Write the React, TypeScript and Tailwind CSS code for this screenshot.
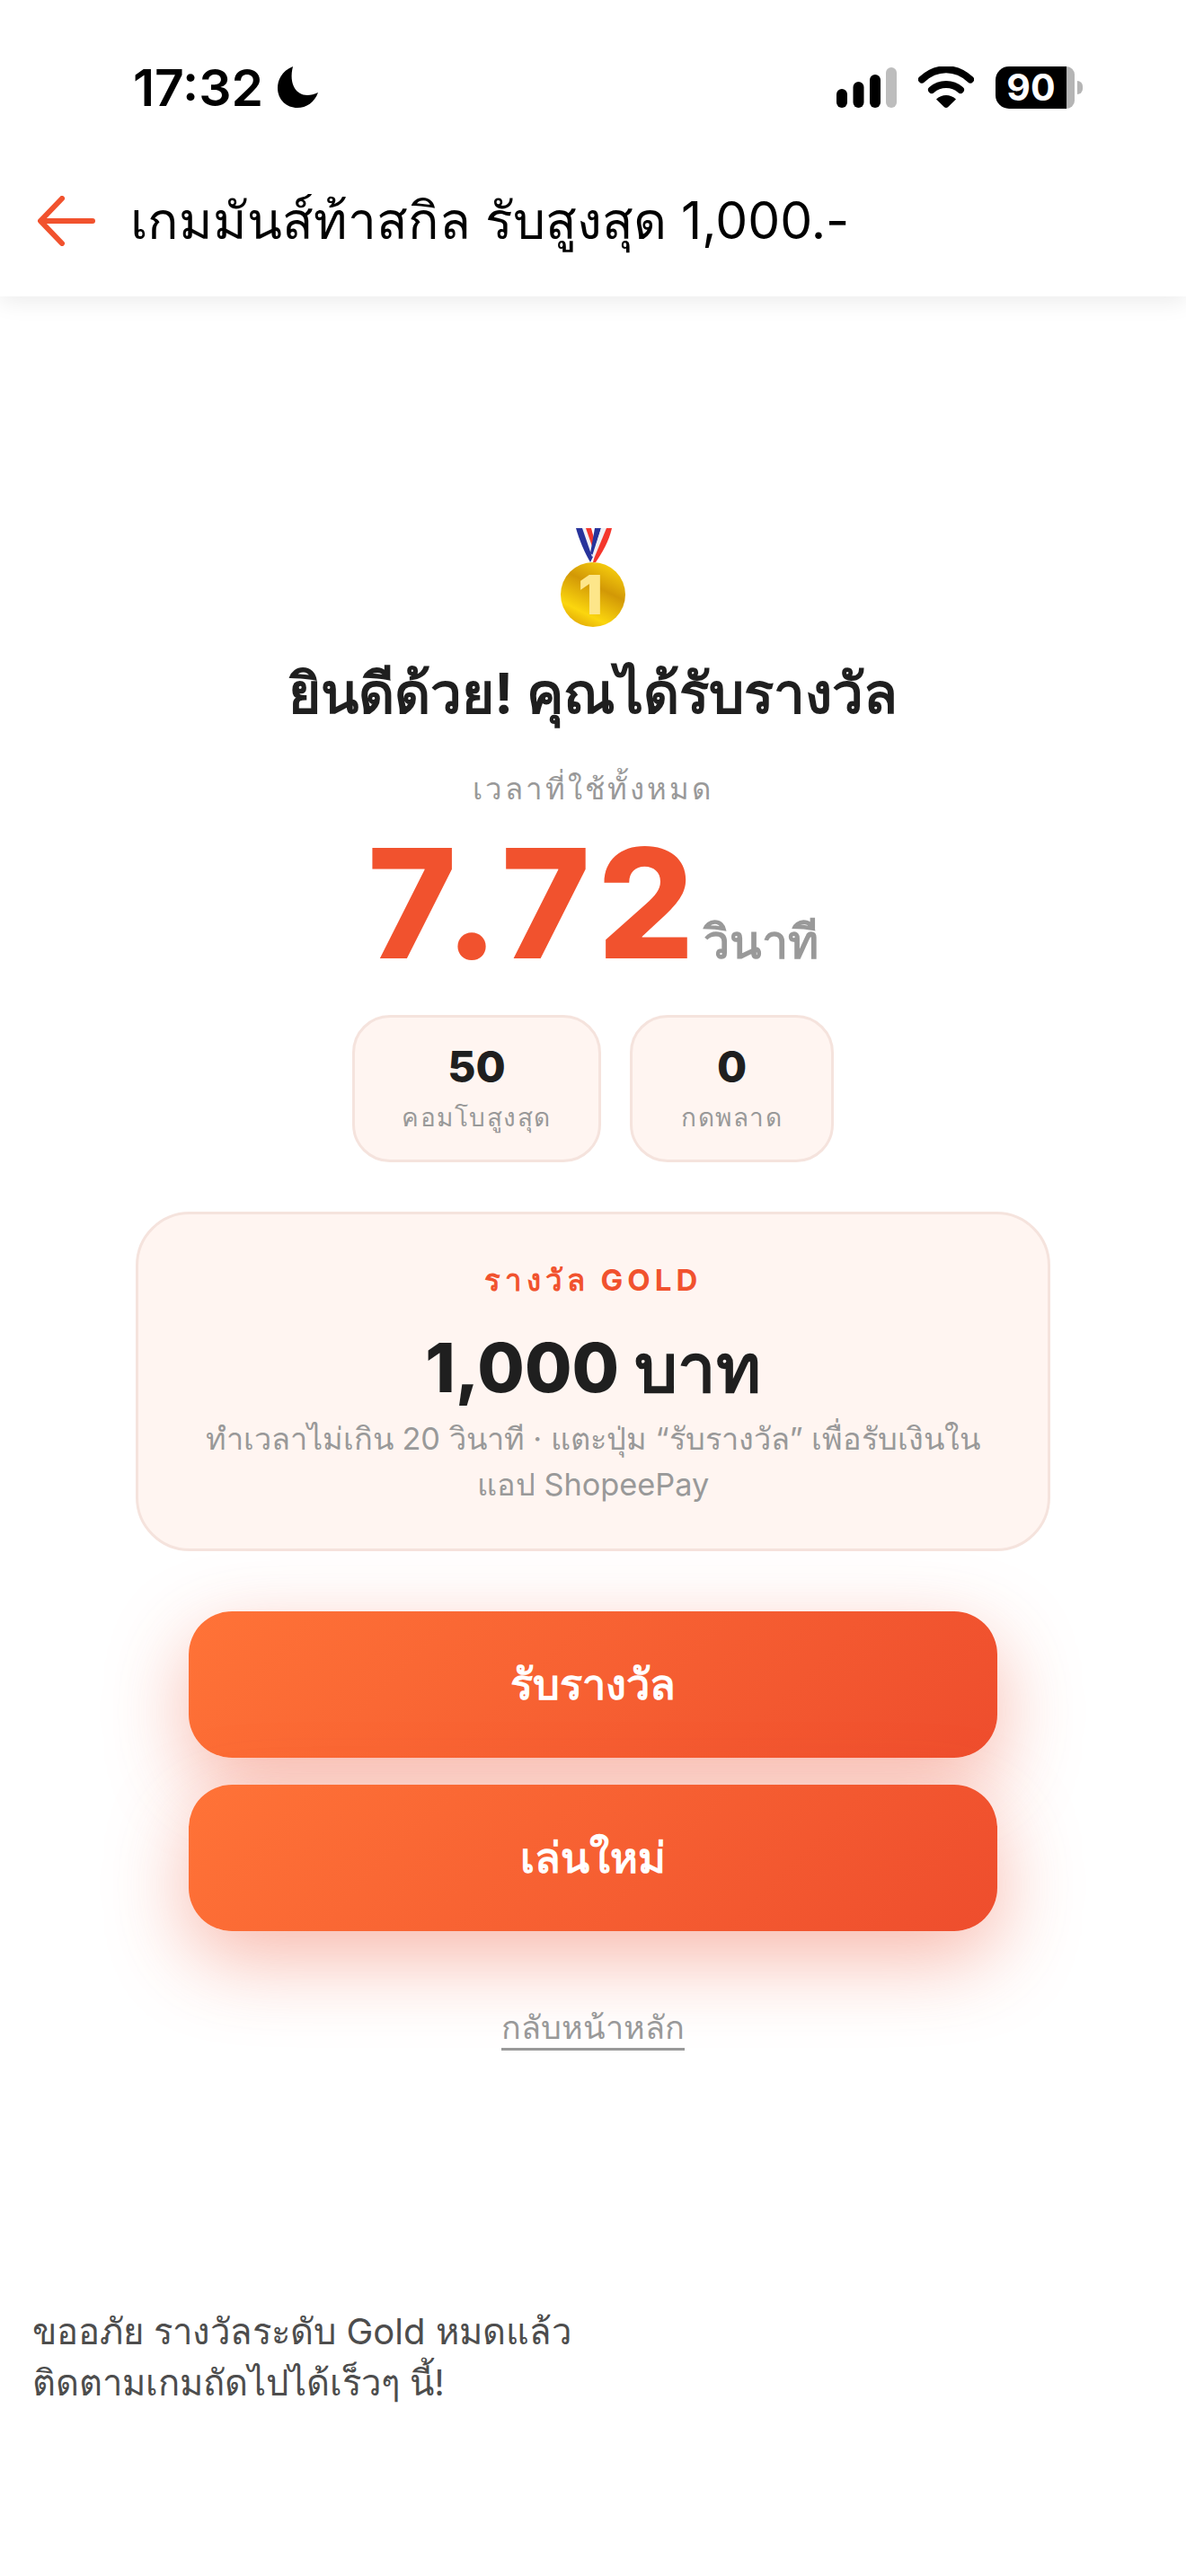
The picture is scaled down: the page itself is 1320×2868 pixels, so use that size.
import React from 'react';

const fontStack = 'font-[Inter,"Noto_Sans",sans-serif]';

function Medal() {
  return (
    <svg width="84" height="112" viewBox="0 0 84 112" aria-hidden="true">
      <defs>
        <linearGradient id="coin" x1="0.8" y1="0" x2="0.3" y2="1">
          <stop offset="0" stopColor="#fbd40e" />
          <stop offset="0.4" stopColor="#d29806" />
          <stop offset="0.8" stopColor="#fbd60e" />
          <stop offset="1" stopColor="#e3ab07" />
        </linearGradient>
      </defs>
      <path d="M33 0h7l6 22-3 6z" fill="#f4362c" />
      <path d="M23 0h8l11 32-3 6C33 28 27 14 23 0z" fill="#27339b" />
      <path d="M30 0h4l9 26-2 6z" fill="#f2f2f6" />
      <path d="M44 0h7L42 30l-3-2z" fill="#27339b" />
      <path d="M51 0h6L44 34l-3-3z" fill="#f0f0f4" />
      <path d="M57 0h6C60 14 52 28 45 38h-3l1-4z" fill="#f4362c" />
      <circle cx="42" cy="74" r="36" fill="url(#coin)" />
      <text x="39" y="96" textAnchor="middle" fontFamily="Inter" fontWeight="900" fontSize="60" fill="#fde68a">1</text>
    </svg>
  );
}

function SignalIcon() {
  return (
    <svg width="67" height="45" viewBox="0 0 67 45" aria-hidden="true">
      <rect x="0" y="24" width="12" height="21" rx="6" fill="#000" />
      <rect x="18.500" y="16" width="12" height="29" rx="6" fill="#000" />
      <rect x="37" y="8" width="12" height="37" rx="6" fill="#000" />
      <rect x="55" y="0" width="12" height="45" rx="6" fill="#bdbdbd" />
    </svg>
  );
}

function WifiIcon() {
  return (
    <svg width="62" height="46" viewBox="0 0 62 46" fill="none" aria-hidden="true">
      <path d="M4 14.500C20 -0.500 42 -0.500 58 14.500" stroke="#000" strokeWidth="8" strokeLinecap="round" />
      <path d="M15 26C24 18 38 18 47 26" stroke="#000" strokeWidth="8" strokeLinecap="round" />
      <path d="M20 36.500C26 30.500 36 30.500 42 36.500L33 45.200C32 46.200 30 46.200 29 45.200z" fill="#000" />
    </svg>
  );
}

function BatteryIcon() {
  return (
    <div className="flex items-center gap-[3px]">
      <div className="flex h-[47px] w-[88px]">
        <div className="flex w-[79px] items-center justify-center rounded-l-[15px] bg-black text-[41px] leading-[47px] font-bold text-white">
          90
        </div>
        <div className="flex-1 rounded-r-[15px] bg-[#b5b5b5]" />
      </div>
      <div className="h-[15px] w-[6px] rounded-r-[6px] bg-[#b5b5b5]" />
    </div>
  );
}

function StatCard({ value, label, width }: { value: string; label: string; width: string }) {
  return (
    <div className={`${width} flex h-[164px] flex-col items-center rounded-[42px] border-[3px] border-[#f5e3dd] bg-[#fff5f1] pt-[26px]`}>
      <div className="text-[48px] leading-[58px] font-extrabold text-[#1f1f1f]">{value}</div>
      <div className="mt-[7px] text-[28px] leading-[40px] tracking-[1.500px] text-[#999999]">{label}</div>
    </div>
  );
}

function ActionButton({ children }: { children: React.ReactNode }) {
  return (
    <button className="flex h-[163px] w-full items-center justify-center rounded-[48px] bg-[linear-gradient(135deg,#ff7337,#ee4d2d)] text-[47px] font-bold text-white shadow-[0_30px_90px_rgba(238,77,45,0.4)]">
      {children}
    </button>
  );
}

export default function App() {
  return (
    <div className={`${fontStack} flex h-[2868px] w-[1320px] flex-col overflow-hidden bg-white text-[#1f1f1f]`}>
      <header className="h-[330px] shrink-0 bg-white shadow-[0_6px_24px_rgba(0,0,0,0.08)]">
        <div className="mt-[69px] flex h-[56px] items-center justify-between pr-[115px] pl-[148px]">
          <div className="flex items-center gap-[16px]">
            <span className="text-[57px] leading-none font-semibold text-black">17:32</span>
            <svg width="46" height="46" viewBox="0 0 46 46" aria-hidden="true">
              <path d="M17 0C4 5 0 16 0 24c0 13 10 22 22 22 10 0 19-6 23-17-4 2-8 3-12 3C21 32 12 20 17 0z" fill="#000" />
            </svg>
          </div>
          <div className="flex items-center gap-[24px]">
            <SignalIcon />
            <WifiIcon />
            <BatteryIcon />
          </div>
        </div>
        <div className="mt-[71px] flex h-[100px] items-center gap-[39px] pl-[42px]">
          <svg width="64" height="56" viewBox="0 0 64 56" fill="none" stroke="#f1522e" strokeWidth="6" strokeLinecap="round" strokeLinejoin="round" aria-hidden="true">
            <path d="M61 28H4" />
            <path d="M27 3L3 28l24 25" />
          </svg>
          <h1 className="text-[57px] leading-[100px] font-normal text-black">เกมมันส์ท้าสกิล รับสูงสุด 1,000.-</h1>
        </div>
      </header>

      <main className="flex flex-col items-center pt-[258px]">
        <Medal />
        <h2 className="mt-[30px] text-[62px] leading-[84px] font-bold text-[#1f1f1f]">ยินดีด้วย! คุณได้รับรางวัล</h2>
        <p className="mt-[39px] text-[33px] leading-[50px] font-medium tracking-[3px] text-[#999999]">เวลาที่ใช้ทั้งหมด</p>
        <div className="mt-[8px] flex items-baseline gap-[2px]">
          <span className="text-[169px] leading-[190px] font-extrabold tracking-[8px] text-[#f1522e]">7.72</span>
          <span className="text-[52px] leading-[70px] font-bold text-[#999999]">วินาที</span>
        </div>
        <div className="mt-[29px] flex gap-[32px]">
          <StatCard value="50" label="คอมโบสูงสุด" width="w-[277px]" />
          <StatCard value="0" label="กดพลาด" width="w-[227px]" />
        </div>
        <section className="mt-[55px] flex h-[378px] w-[1018px] flex-col items-center rounded-[60px] border-[3px] border-[#f5e3dd] bg-[#fff5f1] px-[40px] pt-[48px]">
          <p className="text-[33px] leading-[50px] font-bold tracking-[5px] text-[#f1522e]">รางวัล GOLD</p>
          <p className="mt-[24px] text-[76px] leading-[96px] font-extrabold text-[#1f1f1f]">1,000 บาท</p>
          <p className="mt-[6px] text-center text-[34.300px] leading-[51px] text-[#999999]">
            ทำเวลาไม่เกิน 20 วินาที · แตะปุ่ม “รับรางวัล” เพื่อรับเงินใน
            <br />
            แอป ShopeePay
          </p>
        </section>
        <div className="mt-[67px] flex w-[900px] flex-col gap-[30px]">
          <ActionButton>รับรางวัล</ActionButton>
          <ActionButton>เล่นใหม่</ActionButton>
        </div>
        <a className="mt-[84px] border-b-[3px] border-[#999999] text-[36px] leading-[46px] text-[#999999]">กลับหน้าหลัก</a>
      </main>

      <footer className="mt-[284px] pl-[36px] text-[40px] leading-[57px] text-[#4d4d4d]">
        <p>ขออภัย รางวัลระดับ Gold หมดแล้ว</p>
        <p>ติดตามเกมถัดไปได้เร็วๆ นี้!</p>
      </footer>
    </div>
  );
}
